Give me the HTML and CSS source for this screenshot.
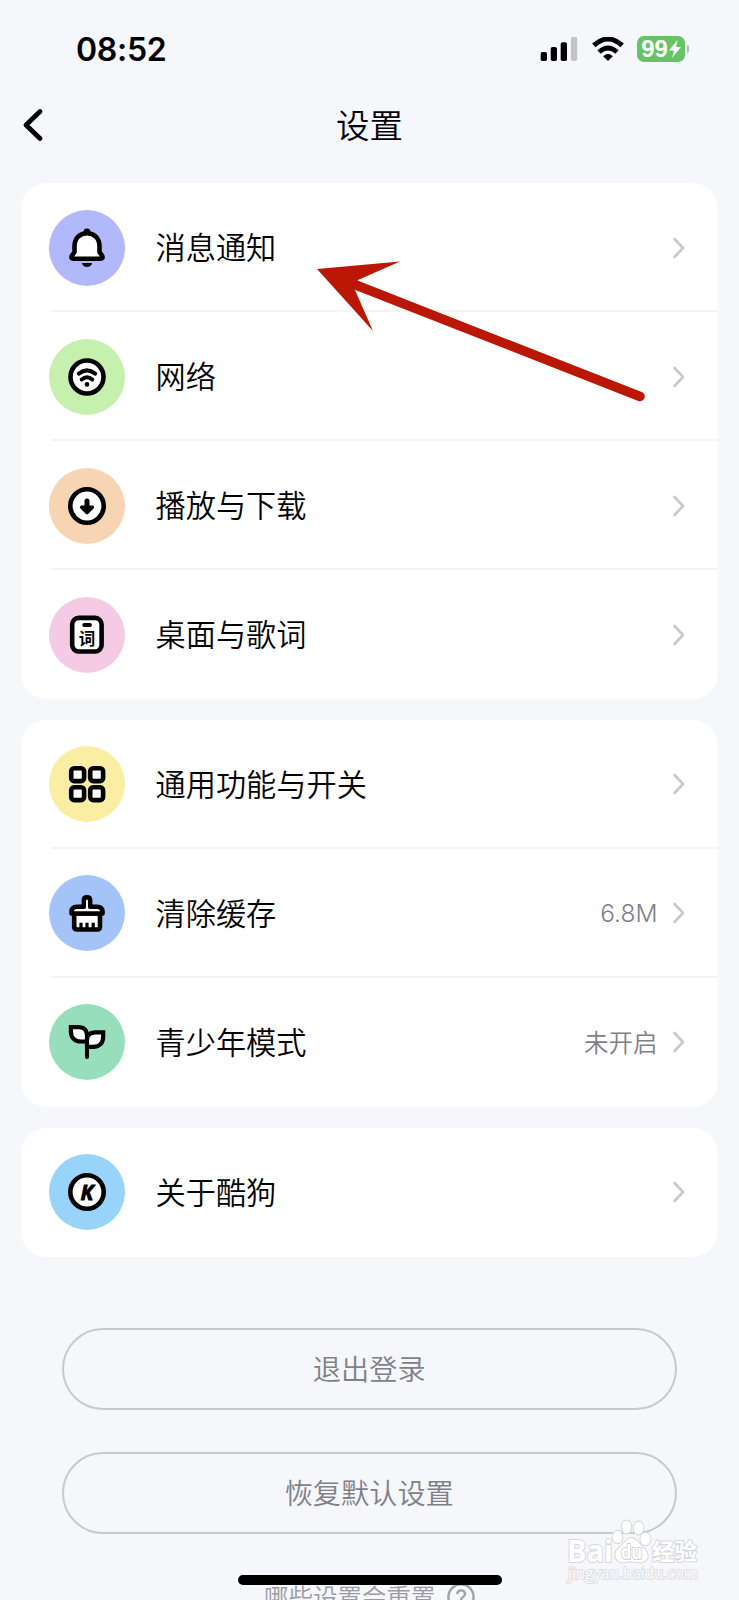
FILE: index.html
```html
<!DOCTYPE html>
<html lang="zh-CN">
<head>
<meta charset="utf-8">
<title>设置</title>
<link rel="stylesheet" href="styles.css">
</head>
<body>
<div class="screen">
  <header class="status">
    <span class="clock">08:52</span>
    <div class="indicators">
      <svg class="signal" width="38" height="26" viewBox="0 0 38 26">
        <rect x="0.7" y="15" width="6.3" height="9" rx="1.8"/>
        <rect x="10.7" y="10" width="6.3" height="14" rx="1.8"/>
        <rect x="20.7" y="5.2" width="6.3" height="18.8" rx="1.8"/>
        <rect x="30.9" y="0" width="6.3" height="24" rx="1.8" fill="#c3c4c8"/>
      </svg>
      <svg class="wifi" width="32" height="24" viewBox="0 0 32 24">
        <path d="M1.8 8.4Q16-4.4 30.2 8.4" fill="none" stroke="#000" stroke-width="5"/>
        <path d="M7 15Q16 7 25 15" fill="none" stroke="#000" stroke-width="4.8"/>
        <path d="M11.200 19.200Q16 15 20.800 19.200L16 24Z"/>
      </svg>
      <div class="battery"><span>99</span>
        <svg width="12" height="18" viewBox="0 0 12 18"><path d="M8.500 0L0 10.500H5L3 18L12 7H7Z" fill="#fff"/></svg>
      </div>
      <i class="battery-tip"></i>
    </div>
  </header>
  <nav class="titlebar">
    <svg class="back" width="22" height="34" viewBox="0 0 22 34"><path d="M18 3.500L4 17L18 30.500" fill="none" stroke="#000" stroke-width="4.800" stroke-linecap="round" stroke-linejoin="round"/></svg>
    <h1>设置</h1>
  </nav>
  <main>
    <section class="card first">
      <div class="row">
        <svg class="icon violet" viewBox="0 0 76 76">
          <circle cx="38" cy="22" r="3.400"/>
          <path d="M25.500 36.500C25.500 28 31 23.300 38 23.300S50.500 28 50.500 36.500V42L53.300 46Q54.400 48.700 51.500 48.700H24.500Q21.600 48.700 22.700 46L25.500 42Z" class="line"/>
          <path d="M32.800 53H43.200Q42 57 38 57T32.800 53Z"/>
        </svg>
        <span class="label">消息通知</span>
        <svg class="chevron" viewBox="0 0 14 24"><path d="M2.500 3L11 12L2.500 21"/></svg>
      </div>
      <div class="row">
        <svg class="icon green" viewBox="0 0 76 76">
          <circle cx="38" cy="38" r="16.500" class="line"/>
          <path d="M29.800 34.600Q38 28.200 46.200 34.600M32.700 40.500Q38 36.100 43.300 40.500" class="line open"/>
          <circle cx="38" cy="45.400" r="2.300"/>
        </svg>
        <span class="label">网络</span>
        <svg class="chevron" viewBox="0 0 14 24"><path d="M2.500 3L11 12L2.500 21"/></svg>
      </div>
      <div class="row">
        <svg class="icon orange" viewBox="0 0 76 76">
          <circle cx="38" cy="38" r="16.700" class="line"/>
          <path d="M38 33V43" fill="none" stroke="#000" stroke-width="5" stroke-linecap="round"/>
          <path d="M32.600 39.300H43.400L38 44.600Z" stroke="#000" stroke-width="3.400" stroke-linejoin="round"/>
        </svg>
        <span class="label">播放与下载</span>
        <svg class="chevron" viewBox="0 0 14 24"><path d="M2.500 3L11 12L2.500 21"/></svg>
      </div>
      <div class="row">
        <svg class="icon pink" viewBox="0 0 76 76">
          <rect x="23.200" y="20.900" width="29.400" height="33.600" rx="6.500" class="line"/>
          <rect x="33.300" y="26" width="9.600" height="4" rx="2"/>
          <text x="38" y="47.700" class="glyph">词</text>
        </svg>
        <span class="label">桌面与歌词</span>
        <svg class="chevron" viewBox="0 0 14 24"><path d="M2.500 3L11 12L2.500 21"/></svg>
      </div>
    </section>
    <section class="card">
      <div class="row">
        <svg class="icon yellow" viewBox="0 0 76 76">
          <g class="line"><rect x="22.200" y="22.200" width="12.900" height="12.900" rx="3"/><rect x="41.200" y="22.200" width="12.900" height="12.900" rx="3"/><rect x="22.200" y="41.200" width="12.900" height="12.900" rx="3"/><rect x="41.200" y="41.200" width="12.900" height="12.900" rx="3"/></g>
        </svg>
        <span class="label">通用功能与开关</span>
        <svg class="chevron" viewBox="0 0 14 24"><path d="M2.500 3L11 12L2.500 21"/></svg>
      </div>
      <div class="row">
        <svg class="icon blue" viewBox="0 0 76 76">
          <path d="M25.200 38.500H51V51.500Q51 54.500 48 54.500H28.200Q25.200 54.500 25.200 51.500Z" class="line"/>
          <path d="M34.900 31.800V25.300Q34.900 22.300 38 22.300T41.100 25.300V31.800H48Q53.500 31.800 53.500 37V38.500H22.500V37Q22.500 31.800 28 31.800Z" class="line"/>
          <path d="M32 54V47.700M38 54V47.700M44.200 54V47.700" fill="none" stroke="#000" stroke-width="3.200"/>
          <path d="M27 34.500H49V36H27ZM37 25.500H39V35H37Z" fill="#fff"/>
        </svg>
        <span class="label">清除缓存</span><span class="value latin">6.8M</span>
        <svg class="chevron" viewBox="0 0 14 24"><path d="M2.500 3L11 12L2.500 21"/></svg>
      </div>
      <div class="row">
        <svg class="icon mint" viewBox="0 0 76 76">
          <path d="M38 53V38.500" class="line open"/>
          <path d="M21.900 23.200H30.500Q38 24 38 31.500V37.500H32C25 37.500 21.900 33 21.900 27.500Z" class="line sharp"/>
          <path d="M54.200 28.300H46Q38 28.800 38 36V42.900H44C51 42.900 54.200 38.500 54.200 32.500Z" class="line sharp"/>
        </svg>
        <span class="label">青少年模式</span><span class="value">未开启</span>
        <svg class="chevron" viewBox="0 0 14 24"><path d="M2.500 3L11 12L2.500 21"/></svg>
      </div>
    </section>
    <section class="card">
      <div class="row">
        <svg class="icon sky" viewBox="0 0 76 76">
          <circle cx="38" cy="38" r="16.700" class="line"/>
          <text x="38" y="45.500" class="brand">K</text>
        </svg>
        <span class="label">关于酷狗</span>
        <svg class="chevron" viewBox="0 0 14 24"><path d="M2.500 3L11 12L2.500 21"/></svg>
      </div>
    </section>
    <div class="actions">
      <button>退出登录</button>
      <button>恢复默认设置</button>
    </div>
    <p class="hint"><span>哪些设置会重置</span>
      <svg width="28" height="28" viewBox="0 0 28 28"><circle cx="14" cy="14" r="12.600"/><path d="M10.200 11.200Q10.500 7.400 14.200 7.400T18 11Q18 13 15.800 14.300Q14 15.400 14 17.400M14 20V22"/></svg>
    </p>
  </main>
  <div class="home-bar"></div>
  <svg class="arrow" width="330" height="144" viewBox="0 0 330 144">
    <path d="M1 2L84 -5.500L42 13L38.500 22L57 64Z" fill="#bb1706"/>
    <path d="M36 16.500L324 129.500" stroke="#bb1706" stroke-width="9.500" stroke-linecap="round"/>
  </svg>
  <svg class="watermark" width="140" height="70" viewBox="0 0 140 70">
    <text x="0" y="42" class="wm-main" textLength="46" lengthAdjust="spacingAndGlyphs">Bai</text>
    <g class="paw">
      <ellipse cx="50.500" cy="17" rx="4.800" ry="6.200"/><ellipse cx="59.500" cy="7" rx="4.800" ry="6.500"/><ellipse cx="71.500" cy="8" rx="4.800" ry="6.500"/><ellipse cx="78.500" cy="19" rx="5" ry="6.200"/>
      <path d="M58 22Q64 14 71 22L79 31Q84 40 74 42.500Q64 40.500 55 42.500Q46 40 49 31Z"/>
    </g>
    <text x="54" y="38.500" class="wm-du" textLength="21" lengthAdjust="spacingAndGlyphs">du</text>
    <text x="85" y="40" class="wm-cn">经验</text>
    <text x="1" y="59" class="wm-url" textLength="130" lengthAdjust="spacingAndGlyphs">jingyan.baidu.com</text>
  </svg>
</div>
</body>
</html>
```
FILE: styles.css
```css
* { box-sizing: border-box; }
body { margin: 0; background: #f5f7fb; }
.screen {
  position: relative; width: 739px; height: 1600px; overflow: hidden;
  background: #f5f7fb; color: #020204;
  font-family: "Noto Sans CJK SC", sans-serif; font-weight: 350;
}
.status { display: flex; justify-content: space-between; align-items: center; height: 98px; padding: 0 50px 0 76px; }
.clock { padding-top: 2px; font: 600 32px/40px Inter, sans-serif; letter-spacing: -0.3px; }
.indicators { display: flex; align-items: center; }
.signal { margin: 2px 14px 0 0; }
.wifi { margin-right: 13px; }
.battery { display: flex; align-items: center; justify-content: center; width: 48px; height: 26px; border-radius: 7px; background: #65c466; color: #fff; font: 700 24px/26px "Liberation Sans", sans-serif; }
.battery svg { margin-left: 1px; }
.battery-tip { width: 2px; height: 8px; margin-left: 2px; border-radius: 0 3px 3px 0; background: #b8b9bf; }
.titlebar { display: grid; grid-template-columns: 80px 1fr 80px; align-items: center; height: 85px; padding-bottom: 31px; }
.back { margin: 0 0 0 22px; }
.titlebar h1 { margin: 0; padding-bottom: 2px; text-align: center; font-size: 33.500px; line-height: 52px; font-weight: inherit; }
main { display: flex; flex-direction: column; gap: 21px; padding: 0 21px 0 20.500px; }
.card { border-radius: 26px; background: #fff; overflow: hidden; }
.row { display: flex; align-items: center; height: 129px; padding: 0 32px 1px 28.500px; background: linear-gradient(#f4f4f6, #f4f4f6) 30px 100% / 100% 2px no-repeat; }
.first .row { padding-bottom: 0; }
.row:last-child { background: none; }
.icon { width: 76px; height: 76px; margin-right: 30.500px; border-radius: 50%; flex: none; }
.violet { background: #b2b9fa; }
.green { background: #c5f0ae; }
.orange { background: #f7d5b4; }
.pink { background: #f4cae5; }
.yellow { background: #f9eea3; }
.blue { background: #a3c3f9; }
.mint { background: #97debd; }
.sky { background: #98d4fa; }
.line { fill: #fff; stroke: #000; stroke-width: 4.600; stroke-linecap: round; stroke-linejoin: round; }
.open { fill: none; stroke-width: 4; }
.sharp { stroke-linejoin: miter; stroke-width: 4.200; }
.glyph { font: 700 16.500px "Noto Sans CJK SC", sans-serif; text-anchor: middle; }
.brand { font: italic 700 21px "Open Sans", sans-serif; text-anchor: middle; stroke: #000; stroke-width: 0.800px; }
.label { flex: 1; padding-bottom: 3px; font-size: 30.200px; line-height: 44px; }
.value { padding-bottom: 1px; margin-right: 14.500px; color: #7f8086; font-size: 24.500px; line-height: 36px; }
.latin { padding-bottom: 0; font-family: Inter, sans-serif; font-weight: 300; }
.chevron { width: 14px; height: 24px; flex: none; }
.chevron path { fill: none; stroke: #c9c9cb; stroke-width: 2.600; stroke-linecap: round; stroke-linejoin: round; }
.actions { display: flex; flex-direction: column; gap: 42px; padding: 50px 41.500px 0; }
.actions button { height: 82px; padding: 0 0 2px; border: 2px solid #c8c9cd; border-radius: 41px; background: transparent; color: #7f8088; font: 350 28.200px/40px "Noto Sans CJK SC", sans-serif; }
.hint { display: flex; justify-content: center; align-items: center; gap: 11px; height: 40px; margin: 22px 0 0; color: #9a9ba3; font-size: 24.500px; line-height: 36px; }
.hint svg { fill: none; stroke: #a0a1a9; stroke-width: 2.400; }
.home-bar { position: absolute; left: 238px; top: 1575px; width: 264px; height: 10px; border-radius: 5px; background: #000; }
.arrow { position: absolute; left: 316px; top: 267px; overflow: visible; }
.watermark { position: absolute; left: 567px; top: 1520px; overflow: visible; fill: #fff; stroke: #d6d7db; stroke-width: 2px; paint-order: stroke; }
.wm-main { font: 700 31px "Open Sans", sans-serif; }
.wm-du { font: 700 20px "Open Sans", sans-serif; stroke: #cfd0d4; }
.wm-cn { font: 700 22.500px "Noto Sans CJK SC", sans-serif; }
.wm-url { font: 400 15.500px "Open Sans", sans-serif; stroke-width: 1.600px; }
```
